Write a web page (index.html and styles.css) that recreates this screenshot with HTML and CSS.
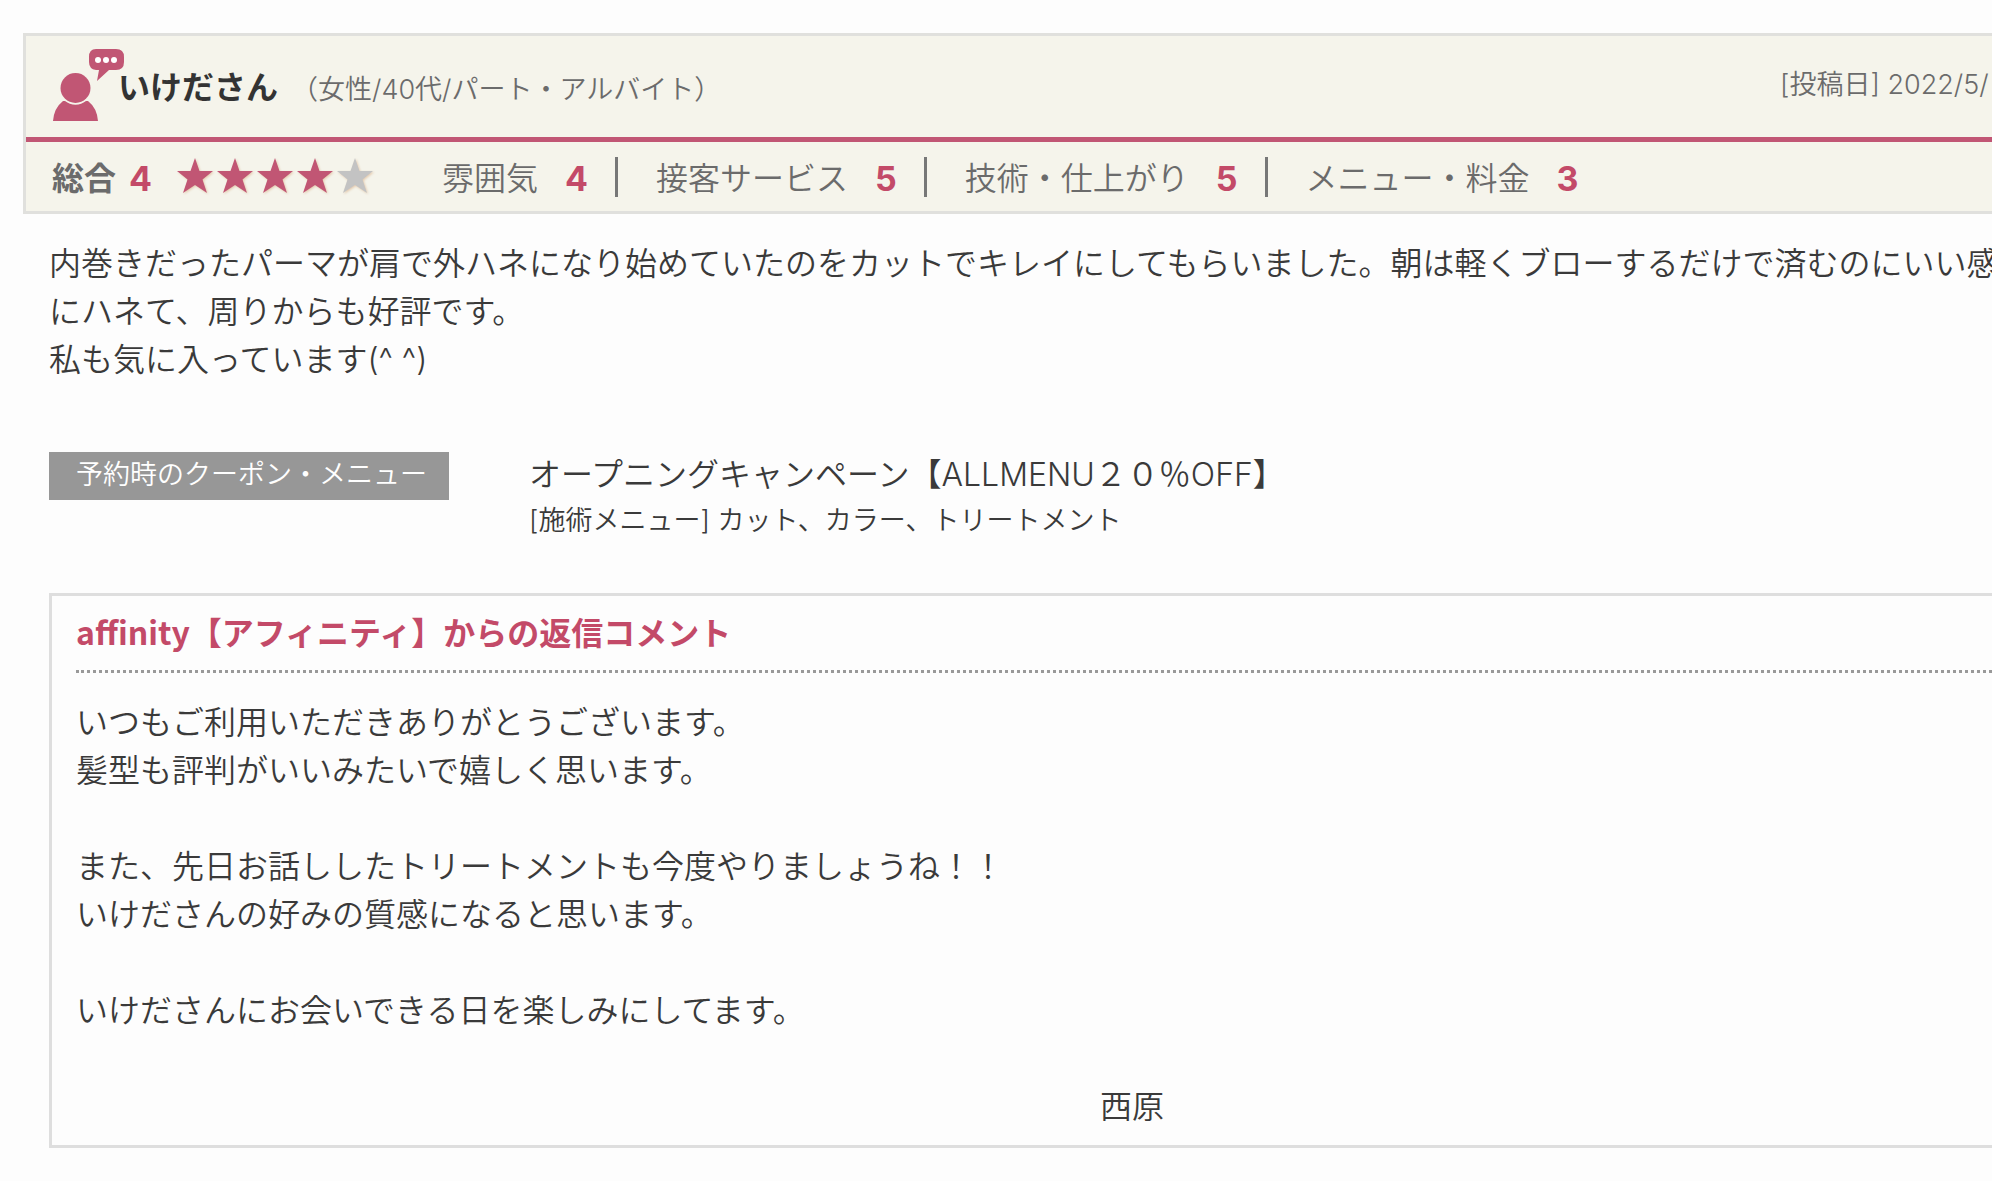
FILE: index.html
```html
<!DOCTYPE html>
<html lang="ja">
<head>
  <meta charset="UTF-8">
  <title>口コミ</title>
  <link rel="stylesheet" href="styles.css">
</head>
<body>

  <article class="review">
    <header class="review-head">
      <div class="user">
        <svg class="user-icon" width="74" height="74" viewBox="0 0 74 74" aria-hidden="true">
          <path d="M11 53H13A17 17 0 0 0 34 53H36Q45 60 46 73H1Q2 60 11 53Z"/>
          <circle cx="23.500" cy="40" r="15"/>
          <path d="M44 1H64Q72 1 72 9V14Q72 22 64 22H57L45 33L47 22H44Q37 21 37 14V9Q37 1 44 1Z"/>
          <circle class="dot" cx="46" cy="12" r="3"/>
          <circle class="dot" cx="54" cy="12" r="3"/>
          <circle class="dot" cx="62" cy="12" r="3"/>
        </svg>
        <h2 class="user-name">いけださん</h2>
        <span class="user-profile">（女性/40代/パート・アルバイト）</span>
        <p class="date">[投稿日] 2022/5/</p>
      </div>

      <div class="scores">
        <div class="total">
          <span>総合</span>
          <b class="point">4</b>
        </div>
        <svg class="stars" width="202" height="44" viewBox="0 0 202 44" role="img" aria-label="5点中4点">
          <defs>
            <path id="star" d="M20 3L24.500 16H38L27.500 24.500L32 38L20 30L8 38L12.500 24.500L2 16H15.500Z"/>
          </defs>
          <use href="#star" x="0"/>
          <use href="#star" x="40"/>
          <use href="#star" x="80"/>
          <use href="#star" x="120"/>
          <use href="#star" x="160" class="star-off"/>
        </svg>
        <ul class="score-list">
          <li>雰囲気<b class="point">4</b></li>
          <li>接客サービス<b class="point">5</b></li>
          <li>技術・仕上がり<b class="point">5</b></li>
          <li>メニュー・料金<b class="point">3</b></li>
        </ul>
      </div>
    </header>

    <div class="review-body">
      <p class="comment">内巻きだったパーマが肩で外ハネになり始めていたのをカットでキレイにしてもらいました。朝は軽くブローするだけで済むのにいい感<br>にハネて、周りからも好評です。<br>私も気に入っています(^ ^)</p>

      <dl class="coupon">
        <dt>予約時のクーポン・メニュー</dt>
        <dd>
          <p class="coupon-name">オープニングキャンペーン【ALLMENU２０％OFF】</p>
          <p class="coupon-menu">[施術メニュー] カット、カラー、トリートメント</p>
        </dd>
      </dl>

      <section class="reply">
        <h3>affinity【アフィニティ】からの返信コメント</h3>
        <p>いつもご利用いただきありがとうございます。<br>髪型も評判がいいみたいで嬉しく思います。</p>
        <p>また、先日お話ししたトリートメントも今度やりましょうね！！<br>いけださんの好みの質感になると思います。</p>
        <p>いけださんにお会いできる日を楽しみにしてます。</p>
        <p class="sign">西原</p>
      </section>
    </div>
  </article>

</body>
</html>
```
FILE: styles.css
```css
* {
  box-sizing: border-box;
}

body {
  margin: 0;
  padding: 33px 0 33px 23px;
  background-color: #fdfdfd;
  color: #3a3a3a;
  font-family: Inter, "Noto Sans CJK JP", sans-serif;
  font-size: 32px;
  font-weight: 350;
  line-height: 48px;
  overflow-x: hidden;
}

h2, h3, p, ul, dl, dd {
  margin: 0;
  padding: 0;
}

.review-head {
  background-color: #f5f4eb;
  border: 3px solid #e0e0dd;
  border-right: none;
  color: #6b6b6b;
}

.user {
  display: flex;
  align-items: center;
  height: 106px;
  padding-left: 26px;
  border-bottom: 5px solid #c15674;
}

.user-icon {
  margin-bottom: 4px;
  fill: #c15674;
}

.user-icon .dot {
  fill: #fff;
}

.user-name {
  margin-left: -8px;
  padding-top: 2px;
  color: #333;
  font-size: 32px;
  font-weight: bold;
}

.user-profile {
  margin-left: 13px;
  padding-top: 6px;
  font-size: 27px;
}

.date {
  width: 212px;
  margin-left: auto;
  padding-bottom: 4px;
  font-size: 27px;
  white-space: nowrap;
}

.scores {
  display: flex;
  align-items: center;
  height: 69px;
  padding-left: 26px;
}

.total {
  display: flex;
  gap: 13px;
  padding-top: 4px;
  font-weight: bold;
}

.point {
  color: #c34a68;
  font-size: 34px;
  font-weight: bold;
}

.stars {
  margin-left: 23px;
  fill: #c15674;
  filter: drop-shadow(1px 1px 1px #e3c9ad);
}

.star-off {
  fill: #c3c3c3;
}

.score-list {
  display: flex;
  margin-left: 27px;
  list-style: none;
}

.score-list li {
  display: flex;
  align-items: center;
  height: 40px;
  margin-left: 38px;
  padding-top: 4px;
}

.score-list li:not(:last-child) {
  padding-right: 27px;
  border-right: 3px solid #777;
}

.score-list .point {
  margin-left: 27px;
}

.review-body {
  padding: 26px 0 0 26px;
}

.comment {
  white-space: nowrap;
}

.coupon {
  display: flex;
  align-items: flex-start;
  margin-top: 67px;
}

.coupon dt {
  flex: none;
  width: 400px;
  margin: 1px 80px 0 0;
  padding: 1px 0 3px 27px;
  background-color: #979797;
  color: #fff;
  font-size: 27px;
  line-height: 44px;
}

.coupon-menu {
  font-size: 27px;
  line-height: 44px;
}

.reply {
  margin-top: 50px;
  padding: 11px 0 14px 24px;
  border: 3px solid #dedede;
  border-right: none;
}

.reply h3 {
  padding-bottom: 15px;
  border-bottom: 3px dotted #999;
  color: #c34a68;
  font-family: "Noto Sans CJK JP", sans-serif;
  font-size: 32px;
  font-weight: bold;
}

.reply p {
  margin-bottom: 48px;
}

.reply h3 + p {
  margin-top: 26px;
}

.reply .sign {
  margin-bottom: 0;
  padding-left: 32em;
}
```
